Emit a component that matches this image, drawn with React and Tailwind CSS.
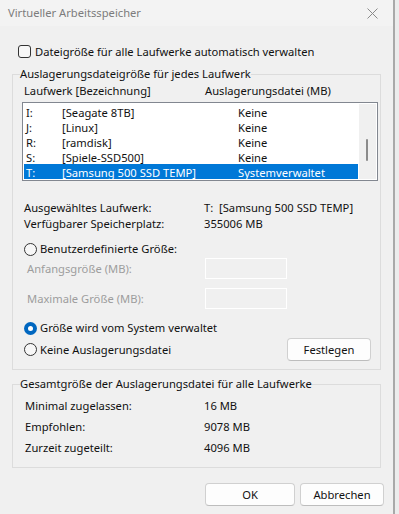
import React from "react"

const drives = [
  { letter: "I:", label: "[Seagate 8TB]", value: "Keine" },
  { letter: "J:", label: "[Linux]", value: "Keine" },
  { letter: "R:", label: "[ramdisk]", value: "Keine" },
  { letter: "S:", label: "[Spiele-SSD500]", value: "Keine" },
  { letter: "T:", label: "[Samsung 500 SSD TEMP]", value: "Systemverwaltet", selected: true },
]

function Radio({ checked }) {
  if (checked) {
    return (
      <span className="w-[13px] h-[13px] rounded-full bg-[#0067c0] flex items-center justify-center shrink-0">
        <span className="w-[5px] h-[5px] rounded-full bg-white" />
      </span>
    )
  }
  return <span className="w-[13px] h-[13px] rounded-full border border-[#333] bg-[#f7f7f7] shrink-0" />
}

function Button({ children, className = "" }) {
  return (
    <div
      className={
        "h-[23px] flex items-center justify-center bg-[#fdfdfd] border border-[#d0d0d0] border-b-[#bdbdbd] rounded-[4px] " +
        className
      }
    >
      {children}
    </div>
  )
}

export default function App() {
  return (
    <div className="w-[399px] h-[514px] flex bg-[#ececec] font-['Noto_Sans',sans-serif] text-[11.2px] leading-[16px] text-[#111]">
      <div className="w-[393px] flex flex-col bg-[#f0f0f0]">
        {/* Title bar */}
        <div className="h-[26px] bg-[#f3f3f3] flex items-center justify-between pl-[8px] pr-[15px] text-[#7c7c7c]">
          <span>Virtueller Arbeitsspeicher</span>
          <svg width="11" height="11" viewBox="0 0 11 11">
            <path d="M0.5 0.5 L10.5 10.5 M10.5 0.5 L0.5 10.5" stroke="#8a8a8a" strokeWidth="1" />
          </svg>
        </div>

        <div className="pl-[12px] pr-[12px]">
          {/* Auto manage checkbox */}
          <div className="mt-[19px] pl-[6px] h-[13px] flex items-center gap-[4px]">
            <span className="w-[13px] h-[13px] rounded-[3px] border border-[#333] bg-[#f7f7f7]" />
            <span>Dateigröße für alle Laufwerke automatisch verwalten</span>
          </div>

          {/* Per drive */}
          <fieldset className="mt-[8px] border border-[#dcdcdc] pb-[8px]">
            <legend className="ml-[7px] px-0">Auslagerungsdateigröße für jedes Laufwerk</legend>
            <div className="pl-[11px] mt-[1px] flex">
              <span className="w-[181px]">Laufwerk [Bezeichnung]</span>
              <span>Auslagerungsdatei (MB)</span>
            </div>
            <div className="ml-[9px] mt-[3px] w-[356px] h-[79px] border border-[#828790] bg-white p-[1px] flex">
              <div className="w-[334px] flex flex-col">
                {drives.map((d) => (
                  <div
                    key={d.letter}
                    className={
                      "h-[15px] leading-[15px] flex items-center pl-[2px] pt-[1px] " +
                      (d.selected ? "bg-[#0078d7] text-white" : "")
                    }
                  >
                    <span className="w-[36px]">{d.letter}</span>
                    <span className="w-[176px]">{d.label}</span>
                    <span>{d.value}</span>
                  </div>
                ))}
              </div>
              <div className="ml-[1px] w-[17px] bg-[#f0f0f0] pt-[35px] pl-[7px]">
                <div className="w-[2px] h-[22px] rounded-full bg-[#8b8b8b]" />
              </div>
            </div>

            <div className="mt-[19px] pl-[11px] flex">
              <span className="w-[180px]">Ausgewähltes Laufwerk:</span>
              <span>T:&nbsp; [Samsung 500 SSD TEMP]</span>
            </div>
            <div className="pl-[11px] flex">
              <span className="w-[180px]">Verfügbarer Speicherplatz:</span>
              <span>355006 MB</span>
            </div>

            <div className="mt-[9px] pl-[11px] h-[16px] flex items-center gap-[3px]">
              <Radio />
              <span>Benutzerdefinierte Größe:</span>
            </div>
            <div className="mt-[1px] pl-[14px] flex items-center text-[#9d9d9d]">
              <span className="w-[178px]">Anfangsgröße (MB):</span>
              <div className="w-[82px] h-[21px] border border-white" />
            </div>
            <div className="mt-[9px] pl-[14px] flex items-center text-[#9d9d9d]">
              <span className="w-[178px]">Maximale Größe (MB):</span>
              <div className="w-[82px] h-[21px] border border-white" />
            </div>

            <div className="mt-[11px] pl-[11px] h-[16px] flex items-center gap-[3px]">
              <Radio checked />
              <span>Größe wird vom System verwaltet</span>
            </div>
            <div className="mt-[2px] pl-[11px] flex items-center">
              <Radio />
              <span className="ml-[3px]">Keine Auslagerungsdatei</span>
              <Button className="ml-auto mr-[9px] w-[84px]">Festlegen</Button>
            </div>
          </fieldset>

          {/* Totals */}
          <fieldset className="mt-[6px] border border-[#dcdcdc] pb-[9px]">
            <legend className="ml-[7px] px-0">Gesamtgröße der Auslagerungsdatei für alle Laufwerke</legend>
            <div className="mt-[3px] pl-[12px]">
              {[
                ["Minimal zugelassen:", "16 MB"],
                ["Empfohlen:", "9078 MB"],
                ["Zurzeit zugeteilt:", "4096 MB"],
              ].map(([k, v]) => (
                <div key={k} className="h-[21px] flex items-center">
                  <span className="w-[179px]">{k}</span>
                  <span>{v}</span>
                </div>
              ))}
            </div>
          </fieldset>

          <div className="mt-[15px] flex justify-end gap-[5px]">
            <Button className="w-[90px]">OK</Button>
            <Button className="w-[84px] -mr-[3px]">Abbrechen</Button>
          </div>
        </div>
      </div>
      <div className="w-[2px] bg-[#a9a9a9]" />
    </div>
  )
}
